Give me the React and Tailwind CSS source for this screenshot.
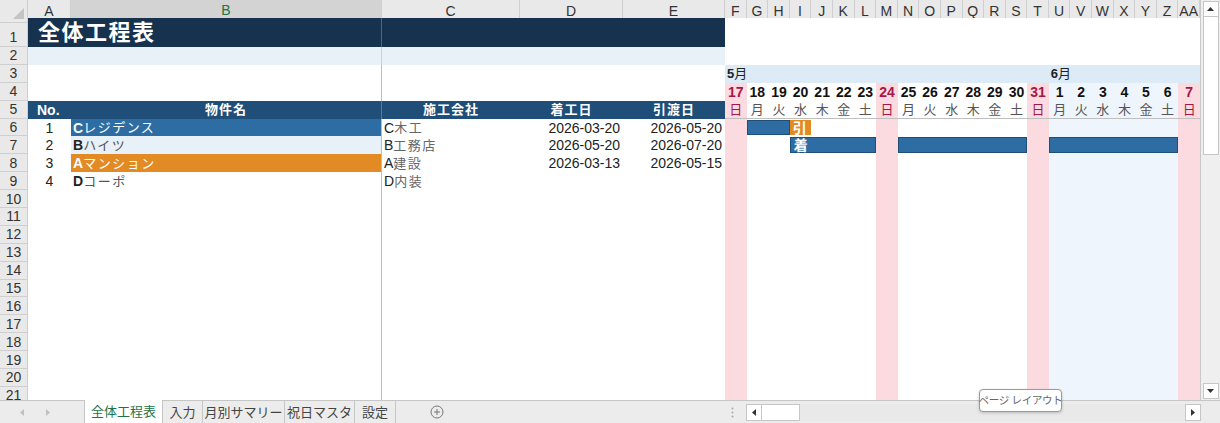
import React from "react";

const COLS =
  "grid grid-cols-[28px_43px_311px_138px_103px_102px_repeat(22,minmax(0,1fr))] w-[1200px]";
const RH = " h-[17.9px]";
const LETTERS = ["F","G","H","I","J","K","L","M","N","O","P","Q","R","S","T","U","V","W","X","Y","Z","AA"];
const DAYS = [17,18,19,20,21,22,23,24,25,26,27,28,29,30,31,1,2,3,4,5,6,7];
const WD = ["日","月","火","水","木","金","土"];
const isSun = (i) => i % 7 === 0;
const isJune = (i) => i >= 15 && i <= 20;

function ganttBg(i) {
  if (isSun(i)) return "bg-[#fbdbe0]";
  if (isJune(i)) return "bg-[#eef5fc]";
  return "bg-white";
}

function RowLabel({ n, tall }) {
  return (
    <div
      className={
        "flex justify-center bg-[#e9e9e9] border-r border-b border-[#cfcfcf] text-[14px] leading-none text-[#333] " +
        (tall ? "items-end pb-[2px]" : "items-center")
      }
    >
      {n}
    </div>
  );
}

function HeaderRow() {
  return (
    <div className={COLS + " h-[18px]"}>
      <div className="relative bg-[#e9e9e9] border-r border-b border-[#cfcfcf]">
        <svg className="absolute right-[3px] bottom-[3px]" width="11" height="11" viewBox="0 0 11 11">
          <polygon points="11,0 11,11 0,11" fill="#c4c4c4" />
        </svg>
      </div>
      <div className="flex items-center justify-center bg-[#e9e9e9] border-r border-b border-[#cfcfcf] text-[14px] text-[#333]">A</div>
      <div className="flex items-center justify-center bg-[#d3d3d3] border-r border-[#cfcfcf] border-b-2 border-b-[#217346] text-[14px] text-[#217346]">B</div>
      <div className="flex items-center justify-center bg-[#e9e9e9] border-r border-b border-[#cfcfcf] text-[14px] text-[#333]">C</div>
      <div className="flex items-center justify-center bg-[#e9e9e9] border-r border-b border-[#cfcfcf] text-[14px] text-[#333]">D</div>
      <div className="flex items-center justify-center bg-[#e9e9e9] border-r border-b border-[#cfcfcf] text-[14px] text-[#333]">E</div>
      {LETTERS.map((l) => (
        <div key={l} className="flex items-center justify-center bg-[#e9e9e9] border-r border-b border-[#cfcfcf] text-[14px] text-[#333] whitespace-nowrap overflow-hidden">
          {l}
        </div>
      ))}
    </div>
  );
}

function GanttCells({ render }) {
  return LETTERS.map((l, i) => (
    <div key={l} className={"relative " + ganttBg(i)}>
      {render ? render(i) : null}
    </div>
  ));
}

const bars = {
  6: { 1: ["bar", "s"], 2: ["bar", "e"], 3: ["orange", "引"] },
  7: {
    3: ["bar", "s", "着"], 4: ["bar", "m"], 5: ["bar", "m"], 6: ["bar", "e"],
    8: ["bar", "s"], 9: ["bar", "m"], 10: ["bar", "m"], 11: ["bar", "m"], 12: ["bar", "m"], 13: ["bar", "e"],
    15: ["bar", "s"], 16: ["bar", "m"], 17: ["bar", "m"], 18: ["bar", "m"], 19: ["bar", "m"], 20: ["bar", "e"],
  },
};

function BarCell({ spec }) {
  if (!spec) return null;
  if (spec[0] === "orange") {
    return (
      <div className="absolute inset-x-0 top-[1px] bottom-[1px] bg-[#e28a24] flex items-center pl-[3px] text-[14px] font-bold text-white leading-none">
        {spec[1]}
      </div>
    );
  }
  const pos = spec[1];
  const cls = pos === "s" ? "border-l" : pos === "e" ? "border-r" : "";
  return (
    <div className={"absolute inset-x-0 top-[1px] bottom-[1px] bg-[#2e6da4] border-y border-[#1f4e79] flex items-center pl-[3px] text-[14px] font-bold text-white leading-none whitespace-nowrap " + cls}>
      {spec[2] || ""}
    </div>
  );
}

const data = [
  { n: 6, no: "1", ini: "C", name: "レジデンス", bg: "bg-[#2e6da4]", white: true, cini: "C", comp: "木工", s: "2026-03-20", e: "2026-05-20" },
  { n: 7, no: "2", ini: "B", name: "ハイツ", bg: "bg-[#e8f0f8]", white: false, cini: "B", comp: "工務店", s: "2026-05-20", e: "2026-07-20" },
  { n: 8, no: "3", ini: "A", name: "マンション", bg: "bg-[#e28a24]", white: true, cini: "A", comp: "建設", s: "2026-03-13", e: "2026-05-15" },
  { n: 9, no: "4", ini: "D", name: "コーポ", bg: "bg-white", white: false, cini: "D", comp: "内装", s: "", e: "" },
];

function Sheet() {
  return (
    <div className="w-[1200px] h-[400px] overflow-hidden">
      <HeaderRow />
      {/* Row 1 */}
      <div className={COLS + " h-[29px]"}>
        <RowLabel n={1} tall />
        <div className="col-span-2 bg-[#17324f] border-r border-[#4c6683] flex items-center pl-[10px] text-[22px] font-bold text-white tracking-[1.5px] leading-none">
          全体工程表
        </div>
        <div className="col-span-3 bg-[#17324f]"></div>
        <div className="col-span-22 bg-white"></div>
      </div>
      {/* Row 2 */}
      <div className={COLS + RH}>
        <RowLabel n={2} />
        <div className="col-span-2 bg-[#e8f0f8] border-r border-[#c9d3dd]"></div>
        <div className="col-span-3 bg-[#e8f0f8]"></div>
        <div className="col-span-22 bg-white"></div>
      </div>
      {/* Row 3 */}
      <div className={COLS + RH}>
        <RowLabel n={3} />
        <div className="col-span-2 bg-white border-r border-[#bdbdbd]"></div>
        <div className="col-span-3 bg-white"></div>
        {LETTERS.map((l, i) => (
          <div key={l} className="relative bg-[#ddebf7]">
            {i === 0 || i === 15 ? (
              <span className="absolute left-[2px] top-0 h-full flex items-center whitespace-nowrap text-[13px] font-bold text-[#222] leading-none">
                {i === 0 ? "5" : "6"}
                <span className="font-normal">月</span>
              </span>
            ) : null}
          </div>
        ))}
      </div>
      {/* Row 4 */}
      <div className={COLS + RH}>
        <RowLabel n={4} />
        <div className="col-span-2 bg-white border-r border-[#bdbdbd]"></div>
        <div className="col-span-3 bg-white"></div>
        <GanttCells
          render={(i) => (
            <div className={"h-full flex items-center justify-center text-[14px] font-bold leading-none " + (isSun(i) ? "text-[#a3174a]" : "text-[#111]")}>
              {DAYS[i]}
            </div>
          )}
        />
      </div>
      {/* Row 5 */}
      <div className={COLS + RH}>
        <RowLabel n={5} />
        <div className="bg-[#1f4e79] flex items-center pl-[9px] text-[14px] font-bold text-white leading-none">No.</div>
        <div className="bg-[#1f4e79] border-r border-[#5a7c9c] flex items-center justify-center text-[13px] font-bold text-white tracking-[1px] leading-none">物件名</div>
        <div className="bg-[#1f4e79] flex items-center justify-center text-[13px] font-bold text-white tracking-[1px] leading-none">施工会社</div>
        <div className="bg-[#1f4e79] flex items-center justify-center text-[13px] font-bold text-white tracking-[1px] leading-none">着工日</div>
        <div className="bg-[#1f4e79] flex items-center justify-center text-[13px] font-bold text-white tracking-[1px] leading-none">引渡日</div>
        {LETTERS.map((l, i) => (
          <div key={l} className={"flex items-center justify-center border-b border-[#bfbfbf] text-[13px] leading-none " + ganttBg(i) + (isSun(i) ? " text-[#a3174a]" : " text-[#555]")}>
            {WD[i % 7]}
          </div>
        ))}
      </div>
      {/* Data rows */}
      {data.map((r) => (
        <div key={r.n} className={COLS + RH}>
          <RowLabel n={r.n} />
          <div className="flex items-center justify-center text-[14px] text-[#222] leading-none">{r.no}</div>
          <div className={"flex items-center pl-[2px] border-r border-[#bdbdbd] whitespace-nowrap leading-none " + r.bg}>
            <span className={"text-[14px] font-bold " + (r.white ? "text-white" : "text-[#222]")}>{r.ini}</span>
            <span className={"text-[13px] tracking-[1.5px] " + (r.white ? "text-white" : "text-[#555]")}>{r.name}</span>
          </div>
          <div className="flex items-center pl-[2px] whitespace-nowrap leading-none">
            <span className="text-[14px] text-[#222]">{r.cini}</span>
            <span className="text-[13px] tracking-[1.5px] text-[#666]">{r.comp}</span>
          </div>
          <div className="flex items-center justify-end pr-[3px] text-[14px] text-[#222] leading-none">{r.s}</div>
          <div className="flex items-center justify-end pr-[3px] text-[14px] text-[#222] leading-none">{r.e}</div>
          <GanttCells render={(i) => <BarCell spec={(bars[r.n] || {})[i]} />} />
        </div>
      ))}
      {[10, 11, 12, 13, 14, 15, 16, 17, 18, 19, 20, 21].map((n) => (
        <div key={n} className={COLS + RH}>
          <RowLabel n={n} />
          <div className="col-span-2 border-r border-[#bdbdbd]"></div>
          <div className="col-span-3"></div>
          <GanttCells />
        </div>
      ))}
    </div>
  );
}

function VScroll() {
  return (
    <div className="w-[20px] h-[400px] bg-[#efefef] border-l border-[#c8c8c8] flex flex-col items-center">
      <div className="w-[16px] h-[16px] mt-[1px] bg-white border border-[#c6c6c6] flex items-center justify-center">
        <svg width="7" height="4" viewBox="0 0 7 4"><polygon points="3.5,0 7,4 0,4" fill="#333" /></svg>
      </div>
      <div className="w-[16px] h-[138px] bg-white border border-[#c6c6c6] border-t-0"></div>
      <div className="flex-1"></div>
      <div className="w-[16px] h-[16px] mb-[1px] bg-white border border-[#c6c6c6] flex items-center justify-center">
        <svg width="7" height="4" viewBox="0 0 7 4"><polygon points="0,0 7,0 3.5,4" fill="#333" /></svg>
      </div>
    </div>
  );
}

function TabBar() {
  const tabs = [
    ["入力", "w-[40px]"],
    ["月別サマリー", "w-[82px]"],
    ["祝日マスタ", "w-[70px]"],
    ["設定", "w-[41px]"],
  ];
  return (
    <div className="relative h-[23px] w-[1220px] bg-[#ececec] border-t border-[#c6c6c6] flex items-stretch">
      <div className="w-[85px] flex items-center border-r border-[#c6c6c6]">
        <svg className="ml-[20px]" width="4" height="7" viewBox="0 0 4 7"><polygon points="4,0 4,7 0,3.5" fill="#c0c0c0" /></svg>
        <svg className="ml-[22px]" width="4" height="7" viewBox="0 0 4 7"><polygon points="0,0 4,3.5 0,7" fill="#c0c0c0" /></svg>
      </div>
      <div className="w-[78px] -mt-[1px] bg-white border-r border-[#c6c6c6] flex items-center justify-center text-[13px] text-[#217346] leading-none">
        全体工程表
      </div>
      {tabs.map(([t, w]) => (
        <div key={t} className={w + " border-r border-[#c6c6c6] flex items-center justify-center text-[13px] text-[#444] leading-none"}>
          {t}
        </div>
      ))}
      <div className="w-[48px] flex items-center justify-end">
        <svg width="14" height="14" viewBox="0 0 14 14">
          <circle cx="7" cy="7" r="6" fill="none" stroke="#777" strokeWidth="1" />
          <line x1="7" y1="4" x2="7" y2="10" stroke="#777" strokeWidth="1" />
          <line x1="4" y1="7" x2="10" y2="7" stroke="#777" strokeWidth="1" />
        </svg>
      </div>
      <div className="w-[292px] flex items-center justify-end pr-[2px]">
        <svg width="3" height="11" viewBox="0 0 3 11">
          <circle cx="1.5" cy="1.5" r="1" fill="#aaa" />
          <circle cx="1.5" cy="5.5" r="1" fill="#aaa" />
          <circle cx="1.5" cy="9.5" r="1" fill="#aaa" />
        </svg>
      </div>
      <div className="flex-1 flex items-center pl-[10px]">
        <div className="w-[455px] h-[17px] bg-[#e9e9e9] flex items-stretch">
          <div className="w-[16px] bg-white border border-[#c6c6c6] flex items-center justify-center">
            <svg width="4" height="7" viewBox="0 0 4 7"><polygon points="4,0 4,7 0,3.5" fill="#333" /></svg>
          </div>
          <div className="w-[38px] bg-white border border-[#c6c6c6] border-l-0"></div>
          <div className="flex-1"></div>
          <div className="w-[16px] bg-white border border-[#c6c6c6] flex items-center justify-center">
            <svg width="4" height="7" viewBox="0 0 4 7"><polygon points="0,0 4,3.5 0,7" fill="#333" /></svg>
          </div>
        </div>
      </div>
    </div>
  );
}

export default function App() {
  return (
    <div className="relative w-[1220px] h-[423px] overflow-hidden bg-white font-['Liberation_Sans','Noto_Sans_CJK_JP',sans-serif]">
      <div className="flex">
        <Sheet />
        <VScroll />
      </div>
      <TabBar />
      <div className="absolute left-[979px] top-[389px] w-[83px] h-[23px] rounded-[4px] border border-[#9a9a9a] bg-white shadow-[0_1px_3px_rgba(0,0,0,0.2)] flex items-center justify-center text-[10.5px] tracking-[-0.3px] text-[#666] leading-none whitespace-nowrap">
        ページ レイアウト
      </div>
    </div>
  );
}
